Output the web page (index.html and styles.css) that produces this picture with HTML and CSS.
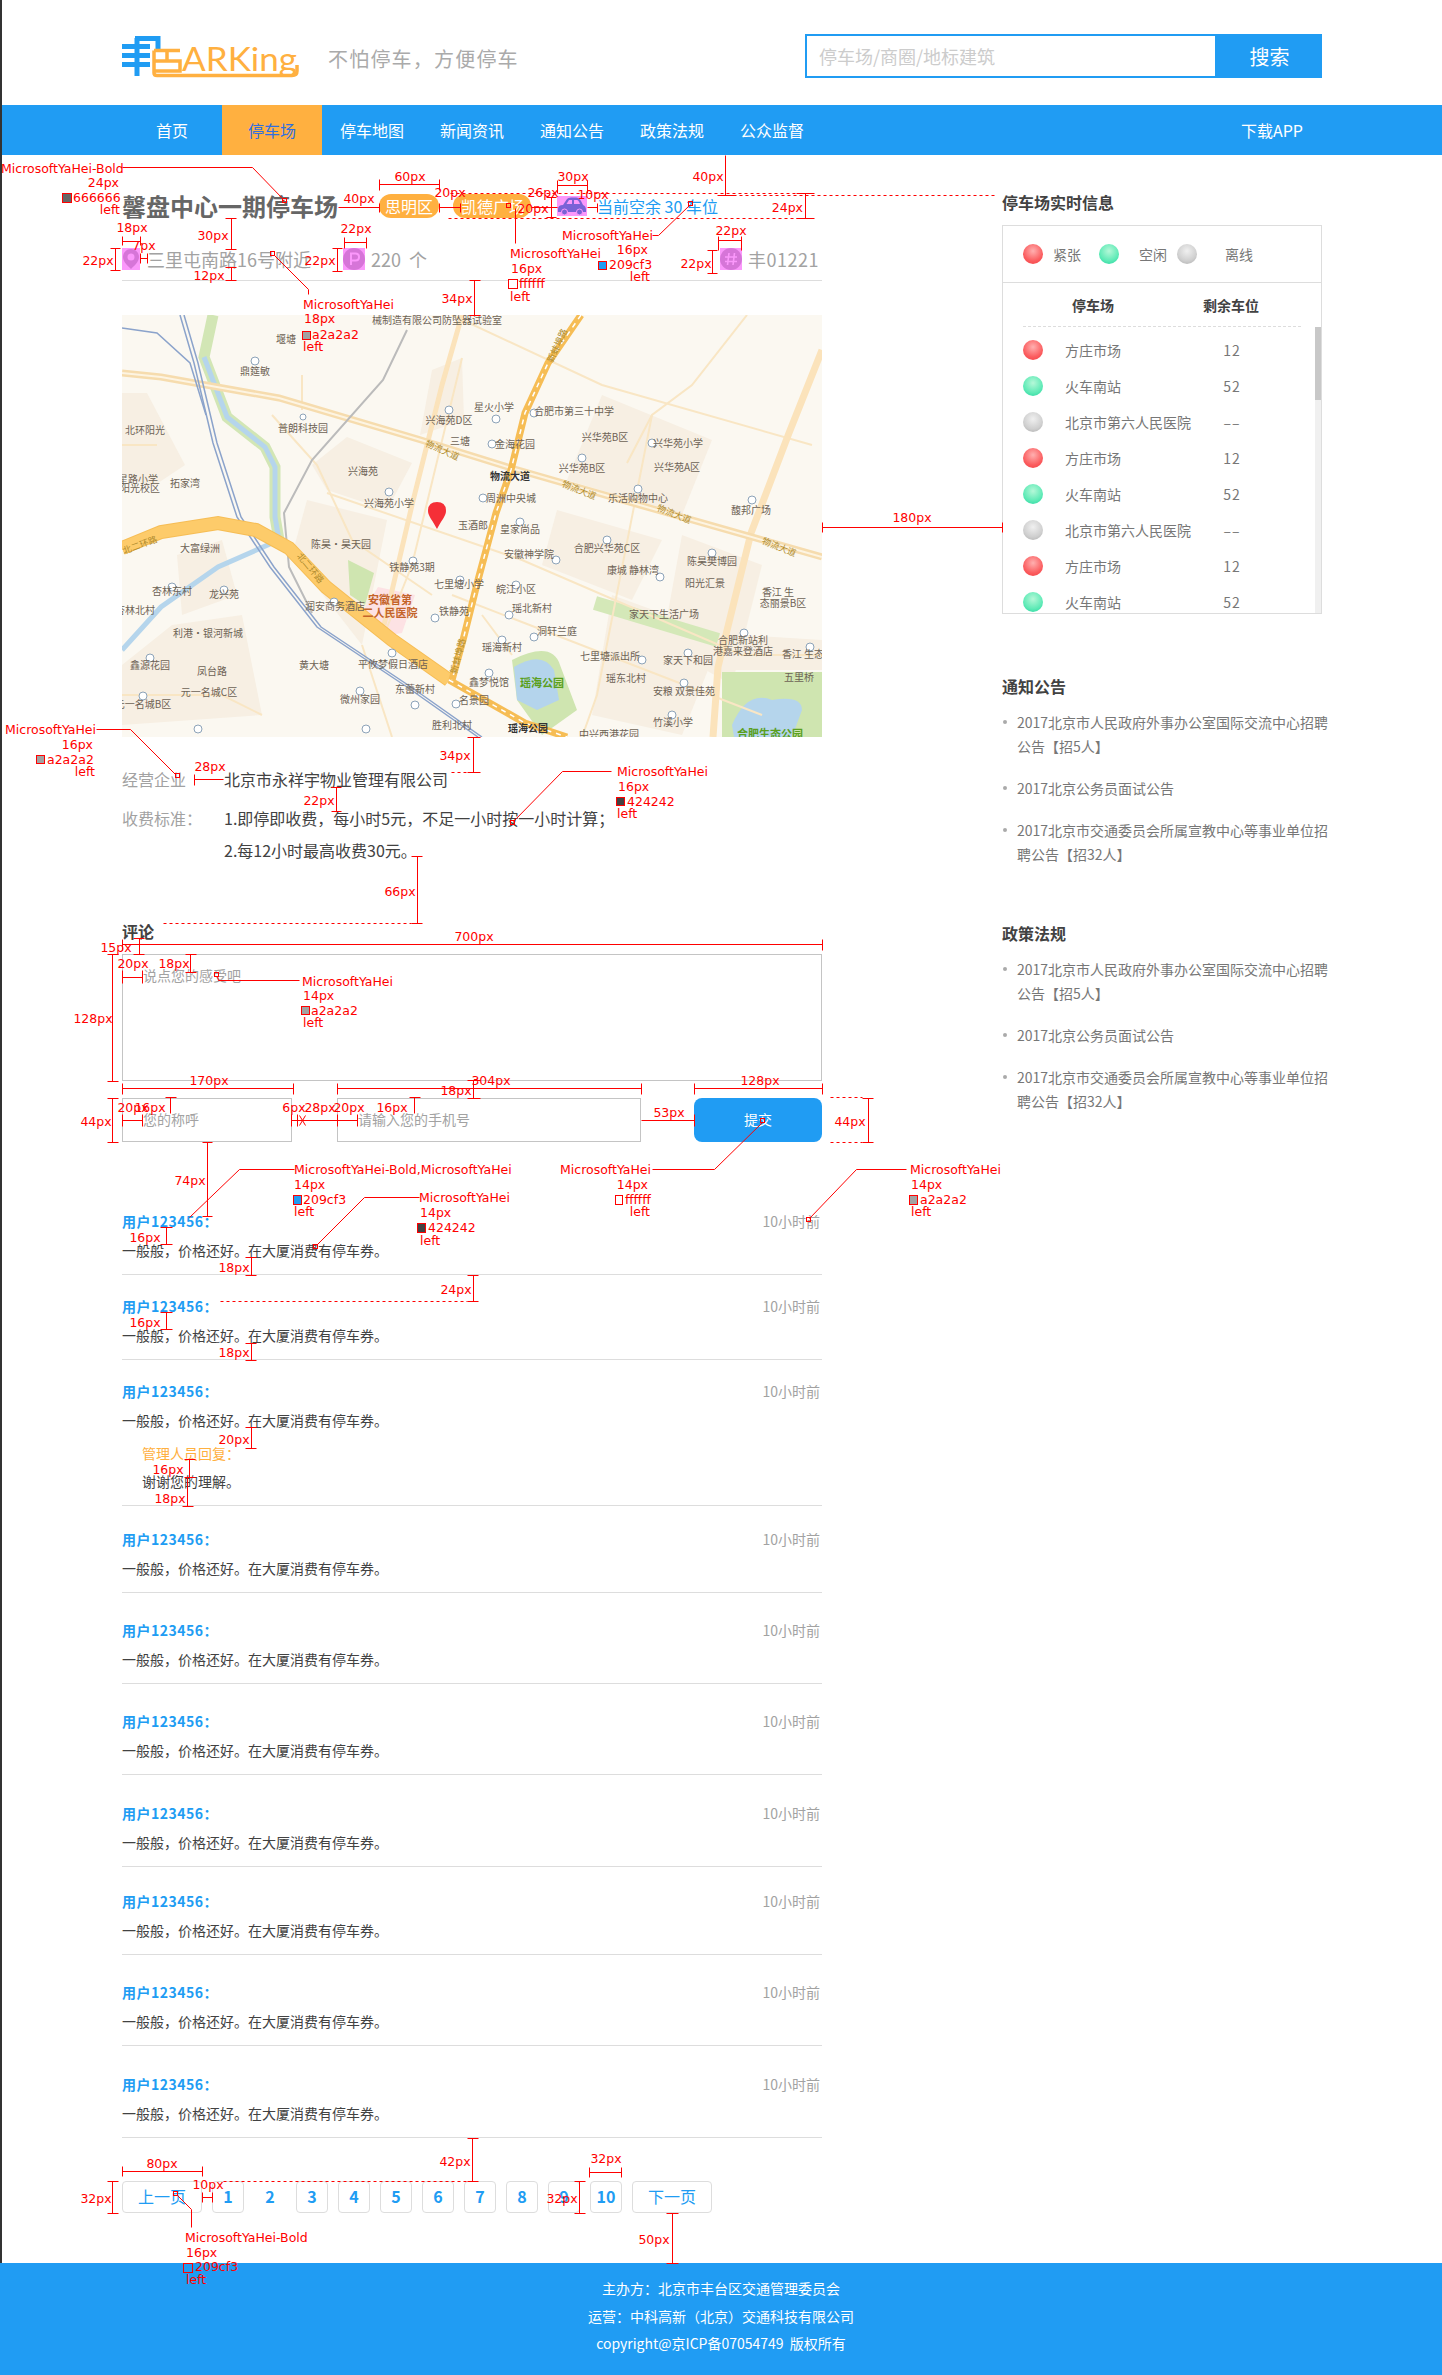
FILE: index.html
```html
<!DOCTYPE html>
<html lang="zh-CN">
<head>
  <meta charset="UTF-8" />
  <title>馨盘中心一期停车场</title>
  <link rel="stylesheet" href="styles.css">
</head>
<body>
  <div class="page">
    <header class="container top">
      <svg class="logo" width="178" height="44" viewBox="0 0 178 44">
        <g fill="none" stroke="#209cf3" stroke-width="5">
          <path d="M0 11.500H28M0 20.500H28M0 29.500H28M15 3V41" />
          <path d="M13 3.500H36V14" />
        </g>
        <g fill="none" stroke="#ffb040" stroke-width="3.500">
          <path d="M32 15.500H58M45 15.500V26M32 26H58V36H32M32 15.500V38Q32 40.500 35 40.500H170Q175 40.500 175 36V30" />
        </g>
        <text class="logo-text" x="60" y="36" textLength="115" lengthAdjust="spacingAndGlyphs">ARKing</text>
      </svg>
      <div class="slogan">不怕停车，方便停车</div>
      <form class="search">
        <input type="text" placeholder="停车场/商圈/地标建筑" />
        <button type="button">搜索</button>
      </form>
    </header>

    <nav class="nav">
      <div class="container nav-row">
        <a class="nav-item">首页</a>
        <a class="nav-item active">停车场</a>
        <a class="nav-item">停车地图</a>
        <a class="nav-item">新闻资讯</a>
        <a class="nav-item">通知公告</a>
        <a class="nav-item">政策法规</a>
        <a class="nav-item">公众监督</a>
        <a class="nav-app">下载APP</a>
      </div>
    </nav>

    <main class="container main">
      <section class="left">
        <div class="title-row">
          <h1>馨盘中心一期停车场</h1>
          <span class="tag tag-first">思明区</span>
          <span class="tag">凯德广场</span>
          <svg class="car-icon" width="30" height="20" viewBox="0 0 30 20">
            <rect width="30" height="20" fill="#fb98fb" />
            <path d="M1 13Q1 9 6 9L10 3Q11 1.500 14 1.500H19Q22 1.500 24 5L26 9Q29 10 29 14V16H1Z" fill="#7a62d6" />
            <path d="M12 4H15V8H9.500ZM17 4H20Q21.500 4 23 8H17Z" fill="#fb98fb" />
            <circle cx="7.500" cy="16" r="3" fill="#7a62d6" stroke="#fb98fb" />
            <circle cx="22.500" cy="16" r="3" fill="#7a62d6" stroke="#fb98fb" />
          </svg>
          <span class="spare">当前空余 30 车位</span>
        </div>

        <div class="meta-row">
          <div class="meta meta-addr">
            <svg class="meta-icon" width="18" height="22" viewBox="0 0 18 22">
              <rect width="18" height="22" fill="#fb98fb" />
              <path d="M9 1C4 1 1 5 1 9C1 14 6 18 9 21C12 18 17 14 17 9C17 5 14 1 9 1Z" fill="#d675d8" />
              <circle cx="9" cy="9" r="3.500" fill="#fb98fb" />
            </svg>
            <span>三里屯南路16号附近</span>
          </div>
          <div class="meta meta-count">
            <svg class="meta-icon" width="22" height="22" viewBox="0 0 22 22">
              <rect width="22" height="22" fill="#fb98fb" />
              <circle cx="11" cy="11" r="11" fill="#d675d8" />
              <path d="M8 17V5.500H12.500Q16 5.500 16 9Q16 12.500 12.500 12.500H8" fill="none" stroke="#fb98fb" stroke-width="2" />
            </svg>
            <span class="count-text">220 个</span>
          </div>
          <div class="meta">
            <svg class="meta-icon" width="22" height="22" viewBox="0 0 22 22">
              <rect width="22" height="22" fill="#fb98fb" />
              <circle cx="11" cy="11" r="11" fill="#d675d8" />
              <path d="M9 5L7.500 17M14.500 5L13 17M5 9H17M5 13.500H17" fill="none" stroke="#fb98fb" stroke-width="1.600" />
            </svg>
            <span class="plate-text">丰01221</span>
          </div>
        </div>

        <svg class="map" width="700" height="422" viewBox="0 0 700 422">
          <rect width="700" height="422" fill="#fbf8f1" />
          <g fill="#f7efe3">
            <path d="M0 78H25L63 150L30 172L0 160Z" />
            <path d="M190 150L225 122L290 148L265 195L205 175Z" />
            <path d="M185 185L265 205L240 330L205 285L170 240Z" />
            <path d="M310 55L340 43L342 105L298 120Z" />
            <path d="M480 80L590 125L560 200L445 165Z" />
            <path d="M435 195L540 225L510 285L420 250Z" />
            <path d="M560 220L640 250L610 370L540 330Z" />
            <path d="M490 280L600 320L560 420L470 400Z" />
            <path d="M55 240L100 225L115 280L60 300Z" />
            <path d="M50 310L120 300L140 400L0 410L0 350Z" />
            <path d="M620 320L700 325V355H610Z" />
          </g>
          <g fill="none" stroke="#d2e6b5">
            <path d="M91 0L82 42L105 102L143 132L153 152L153 202L157 225" stroke-width="11" />
          </g>
          <g fill="none" stroke="#b5d5ec">
            <path d="M82 42L105 102L143 132L153 152L153 202L157 225L96 252L39 292L0 335" stroke-width="5" />
          </g>
          <path d="M473 288L596 325" stroke="#d4e8b8" stroke-width="14" />
          <path d="M256 272L293 280L280 318L268 320L242 295Z" fill="#fde2e4" />
          <path d="M226 245L236 250L252 258L243 290L228 280Z" fill="#cfe5b0" />
          <path d="M390 345Q430 325 438 350L455 395L420 420L395 385Z" fill="#cfe5b0" />
          <path d="M392 352Q420 335 432 355L437 385L415 395L395 385Z" fill="#b4d4ec" />
          <path d="M600 357H700V422H600Z" fill="#cfe5b0" />
          <path d="M610 410Q625 375 650 385Q680 380 680 395L670 422H612Z" fill="#b5d5ec" />
          <g fill="none" stroke="#f9e6c4" stroke-width="2">
            <path d="M150 100L195 150L230 225L310 280" />
            <path d="M340 43L290 250L262 320" />
            <path d="M505 148L530 100L570 70L625 0" />
            <path d="M530 100L475 380L460 422" />
            <path d="M180 60V95M0 130H35" />
            <path d="M205 178L400 245L620 340H700" />
            <path d="M330 280L640 400" />
            <path d="M240 330L270 422M360 300L390 340" />
            <path d="M330 0L480 70L690 130" />
            <path d="M0 380H100L140 400" />
          </g>
          <path d="M700 35L667 118L629 218L596 352L591 422" fill="none" stroke="#fbe3bb" stroke-width="7" />
          <path d="M340 0L320 70L290 190L262 310" fill="none" stroke="#fbe3bb" stroke-width="5" />
          <path d="M0 58L39 62L157 83L299 125L389 153L535 195L700 242" fill="none" stroke="#f6dcae" stroke-width="7" />
          <path d="M0 58L39 62L157 83L299 125L389 153L535 195L700 242" fill="none" stroke="#fdf4e2" stroke-width="2" />
          <g fill="none" stroke="#8ba3cb" stroke-width="1.500">
            <path d="M58 0L72 48L91 128L115 202L148 252L195 312L285 372L356 422" />
            <path d="M62 0L76 48L95 128L119 202L152 252L199 312L289 372L360 422" />
            <path d="M0 13L35 18L68 48L84 100" />
          </g>
          <path d="M285 15L261 65L190 145L162 198L167 252L190 298" fill="none" stroke="#bbb" stroke-width="2" />
          <path d="M0 233L39 217L96 208L134 215L167 233L204 272L270 325L327 365" fill="none" stroke="#f6bd55" stroke-width="14" />
          <path d="M0 233L39 217L96 208L134 215L167 233L204 272L270 325L327 365" fill="none" stroke="#fdcb6a" stroke-width="12" />
          <path d="M327 365L403 408L445 422" fill="none" stroke="#f6bd55" stroke-width="7" />
          <path d="M459 0L426 48L403 98L389 155L374 198L356 265L341 325L330 365" fill="none" stroke="#f6bd55" stroke-width="7" />
          <path d="M327 365L403 408L445 422M459 0L426 48L403 98L389 155L374 198L356 265L341 325L330 365" fill="none" stroke="#fff" stroke-width="1.500" stroke-dasharray="5 5" />
          <g class="poi">
            <circle cx="133" cy="46" r="4" /><circle cx="327" cy="95" r="4" /><circle cx="374" cy="104" r="4" /><circle cx="412" cy="98" r="4" />
            <circle cx="181" cy="102" r="3" /><circle cx="370" cy="129" r="4" /><circle cx="530" cy="128" r="4" /><circle cx="460" cy="143" r="4" />
            <circle cx="267" cy="177" r="4" /><circle cx="361" cy="183" r="4" /><circle cx="516" cy="174" r="4" /><circle cx="630" cy="185" r="4" />
            <circle cx="398" cy="207" r="4" /><circle cx="485" cy="225" r="4" /><circle cx="590" cy="238" r="4" /><circle cx="434" cy="245" r="4" />
            <circle cx="291" cy="246" r="4" /><circle cx="338" cy="265" r="4" /><circle cx="394" cy="270" r="4" /><circle cx="538" cy="262" r="4" />
            <circle cx="50" cy="272" r="4" /><circle cx="102" cy="275" r="4" /><circle cx="212" cy="287" r="4" /><circle cx="313" cy="303" r="4" />
            <circle cx="387" cy="300" r="4" /><circle cx="412" cy="322" r="4" /><circle cx="380" cy="325" r="4" /><circle cx="622" cy="318" r="4" />
            <circle cx="28" cy="343" r="4" /><circle cx="270" cy="338" r="4" /><circle cx="520" cy="345" r="4" /><circle cx="566" cy="338" r="4" />
            <circle cx="367" cy="358" r="4" /><circle cx="562" cy="368" r="4" /><circle cx="238" cy="376" r="4" /><circle cx="293" cy="390" r="4" />
            <circle cx="334" cy="389" r="4" /><circle cx="550" cy="400" r="4" /><circle cx="21" cy="381" r="4" /><circle cx="76" cy="414" r="4" />
            <circle cx="244" cy="414" r="4" /><circle cx="688" cy="332" r="4" />
          </g>
          <g class="map-label">
            <text x="315" y="9">械制造有限公司防坠器试验室</text>
            <text x="133" y="60">鼎筵敏</text>
            <text x="164" y="28">堰塘</text>
            <text x="372" y="96">星火小学</text>
            <text x="452" y="100">合肥市第三十中学</text>
            <text x="327" y="109">兴海苑D区</text>
            <text x="181" y="117">普朗科技园</text>
            <text x="23" y="119">北环阳光</text>
            <text x="483" y="126">兴华苑B区</text>
            <text x="556" y="132">兴华苑小学</text>
            <text x="338" y="130">三塘</text>
            <text x="393" y="133">金海花园</text>
            <text x="241" y="160">兴海苑</text>
            <text x="460" y="157">兴华苑B区</text>
            <text x="555" y="156">兴华苑A区</text>
            <text x="16" y="168">星路小学</text>
            <text x="18" y="177">阳光校区</text>
            <text x="63" y="172">拓家湾</text>
            <text x="267" y="192">兴海苑小学</text>
            <text x="389" y="187">周洲中央城</text>
            <text x="516" y="187">乐活购物中心</text>
            <text x="629" y="199">馥邦广场</text>
            <text x="351" y="214">玉酒郎</text>
            <text x="398" y="218">皇家尚品</text>
            <text x="219" y="233">陈昊·昊天园</text>
            <text x="485" y="237">合肥兴华苑C区</text>
            <text x="590" y="250">陈昊樊博园</text>
            <text x="407" y="243">安徽神学院</text>
            <text x="78" y="237">大富绿洲</text>
            <text x="290" y="256">铁静苑3期</text>
            <text x="511" y="259">康城 静林湾</text>
            <text x="583" y="272">阳光汇景</text>
            <text x="337" y="273">七里塘小学</text>
            <text x="394" y="278">皖江小区</text>
            <text x="50" y="280">杏林东村</text>
            <text x="102" y="283">龙兴苑</text>
            <text x="656" y="281">香江 生</text>
            <text x="661" y="292">态丽景B区</text>
            <text x="213" y="295">润安商务酒店</text>
            <text x="332" y="300">铁静苑</text>
            <text x="410" y="297">瑶北新村</text>
            <text x="542" y="303">家天下生活广场</text>
            <text x="13" y="299">杏林北村</text>
            <text x="435" y="320">洞轩兰庭</text>
            <text x="86" y="322">利港·银河新城</text>
            <text x="380" y="336">瑶海新村</text>
            <text x="621" y="329">合肥新站利</text>
            <text x="621" y="340">港嘉来登酒店</text>
            <text x="681" y="343">香江 生态</text>
            <text x="28" y="354">鑫源花园</text>
            <text x="271" y="353">平攸梦假日酒店</text>
            <text x="192" y="354">黄大塘</text>
            <text x="488" y="345">七里塘派出所</text>
            <text x="566" y="349">家天下和园</text>
            <text x="90" y="360">凤台路</text>
            <text x="504" y="367">瑶东北村</text>
            <text x="367" y="371">鑫梦悦馆</text>
            <text x="562" y="380">安粮 双景佳苑</text>
            <text x="677" y="366">五里桥</text>
            <text x="87" y="381">元一名城C区</text>
            <text x="238" y="388">微州家园</text>
            <text x="293" y="378">东蕾新村</text>
            <text x="21" y="393">元一名城B区</text>
            <text x="352" y="389">名景园</text>
            <text x="551" y="411">竹溪小学</text>
            <text x="330" y="414">胜利北村</text>
            <text x="487" y="423">中兴西港花园</text>
          </g>
          <g class="map-label map-dark">
            <text x="388" y="165">物流大道</text>
            <text x="406" y="417">瑶海公园</text>
          </g>
          <g class="map-label map-hospital">
            <text x="268" y="289">安徽省第</text>
            <text x="268" y="302">二人民医院</text>
          </g>
          <g class="map-label map-park">
            <text x="420" y="372">瑶海公园</text>
            <text x="648" y="423">合肥生态公园</text>
          </g>
          <g class="map-label map-road">
            <text transform="translate(319 138) rotate(24)">物流大道</text>
            <text transform="translate(456 178) rotate(22)">物流大道</text>
            <text transform="translate(551 202) rotate(22)">物流大道</text>
            <text transform="translate(656 235) rotate(22)">物流大道</text>
            <text transform="translate(19 233) rotate(-20)">北二环路</text>
            <text transform="translate(186 255) rotate(50)">北二环路</text>
            <text transform="translate(438 32) rotate(-65)">新蚌埠路</text>
            <text transform="translate(339 342) rotate(-75)">新蚌埠路</text>
          </g>
          <path d="M315 214C311 206 306 201 306 196Q306 187 315 187Q324 187 324 196C324 201 319 206 315 214Z" fill="#f52f37" />
        </svg>

        <div class="info">
          <div class="info-row">
            <span class="info-label">经营企业</span>
            <div class="info-value"><p>北京市永祥宇物业管理有限公司</p></div>
          </div>
          <div class="info-row">
            <span class="info-label">收费标准：</span>
            <div class="info-value">
              <p>1.即停即收费，每小时5元，不足一小时按一小时计算；</p>
              <p>2.每12小时最高收费30元。</p>
            </div>
          </div>
        </div>

        <h3 class="comment-title">评论</h3>
        <textarea class="comment-box" placeholder="说点您的感受吧"></textarea>
        <div class="comment-form">
          <input class="input-name" type="text" placeholder="您的称呼" />
          <input class="input-phone" type="text" placeholder="请输入您的手机号" />
          <button class="submit" type="button">提交</button>
        </div>

        <div class="comments">
          <div class="comment">
            <div class="comment-head"><b>用户123456：</b><span>10小时前</span></div>
            <p>一般般，价格还好。在大厦消费有停车券。</p>
          </div>
          <div class="comment">
            <div class="comment-head"><b>用户123456：</b><span>10小时前</span></div>
            <p>一般般，价格还好。在大厦消费有停车券。</p>
          </div>
          <div class="comment">
            <div class="comment-head"><b>用户123456：</b><span>10小时前</span></div>
            <p>一般般，价格还好。在大厦消费有停车券。</p>
            <div class="reply">
              <b>管理人员回复：</b>
              <p>谢谢您的理解。</p>
            </div>
          </div>
          <div class="comment pad-2">
            <div class="comment-head"><b>用户123456：</b><span>10小时前</span></div>
            <p>一般般，价格还好。在大厦消费有停车券。</p>
          </div>
          <div class="comment pad-6">
            <div class="comment-head"><b>用户123456：</b><span>10小时前</span></div>
            <p>一般般，价格还好。在大厦消费有停车券。</p>
          </div>
          <div class="comment pad-6">
            <div class="comment-head"><b>用户123456：</b><span>10小时前</span></div>
            <p>一般般，价格还好。在大厦消费有停车券。</p>
          </div>
          <div class="comment pad-7">
            <div class="comment-head"><b>用户123456：</b><span>10小时前</span></div>
            <p>一般般，价格还好。在大厦消费有停车券。</p>
          </div>
          <div class="comment pad-3">
            <div class="comment-head"><b>用户123456：</b><span>10小时前</span></div>
            <p>一般般，价格还好。在大厦消费有停车券。</p>
          </div>
          <div class="comment pad-6">
            <div class="comment-head"><b>用户123456：</b><span>10小时前</span></div>
            <p>一般般，价格还好。在大厦消费有停车券。</p>
          </div>
          <div class="comment pad-7">
            <div class="comment-head"><b>用户123456：</b><span>10小时前</span></div>
            <p>一般般，价格还好。在大厦消费有停车券。</p>
          </div>
        </div>

        <div class="pager">
          <a class="page-btn page-wide">上一页</a>
          <a class="page-btn">1</a>
          <a class="page-btn page-plain">2</a>
          <a class="page-btn">3</a>
          <a class="page-btn">4</a>
          <a class="page-btn">5</a>
          <a class="page-btn">6</a>
          <a class="page-btn">7</a>
          <a class="page-btn">8</a>
          <a class="page-btn">9</a>
          <a class="page-btn">10</a>
          <a class="page-btn page-wide">下一页</a>
        </div>
      </section>

      <aside class="right">
        <h3 class="side-title side-first">停车场实时信息</h3>
        <div class="panel">
          <div class="legend">
            <i class="dot red"></i><span class="legend-a">紧张</span>
            <i class="dot green"></i><span class="legend-b">空闲</span>
            <i class="dot grey"></i><span class="legend-c">离线</span>
          </div>
          <div class="panel-head"><span class="head-name">停车场</span><span class="head-left">剩余车位</span></div>
          <div class="panel-body">
            <div class="lot"><i class="dot red"></i><span class="lot-name">方庄市场</span><span class="lot-left">12</span></div>
            <div class="lot"><i class="dot green"></i><span class="lot-name">火车南站</span><span class="lot-left">52</span></div>
            <div class="lot"><i class="dot grey"></i><span class="lot-name">北京市第六人民医院</span><span class="lot-left">––</span></div>
            <div class="lot"><i class="dot red"></i><span class="lot-name">方庄市场</span><span class="lot-left">12</span></div>
            <div class="lot"><i class="dot green"></i><span class="lot-name">火车南站</span><span class="lot-left">52</span></div>
            <div class="lot"><i class="dot grey"></i><span class="lot-name">北京市第六人民医院</span><span class="lot-left">––</span></div>
            <div class="lot"><i class="dot red"></i><span class="lot-name">方庄市场</span><span class="lot-left">12</span></div>
            <div class="lot"><i class="dot green"></i><span class="lot-name">火车南站</span><span class="lot-left">52</span></div>
            <div class="scroll-track"><div class="scroll-thumb"></div></div>
          </div>
        </div>

        <h3 class="side-title side-notice">通知公告</h3>
        <ul class="news">
          <li>2017北京市人民政府外事办公室国际交流中心招聘公告【招5人】</li>
          <li>2017北京公务员面试公告</li>
          <li>2017北京市交通委员会所属宣教中心等事业单位招聘公告【招32人】</li>
        </ul>

        <h3 class="side-title">政策法规</h3>
        <ul class="news">
          <li>2017北京市人民政府外事办公室国际交流中心招聘公告【招5人】</li>
          <li>2017北京公务员面试公告</li>
          <li>2017北京市交通委员会所属宣教中心等事业单位招聘公告【招32人】</li>
        </ul>
      </aside>
    </main>
  </div>

  <footer class="footer">
    <p>主办方：北京市丰台区交通管理委员会</p>
    <p>运营：中科高新（北京）交通科技有限公司</p>
    <p>copyright@京ICP备07054749&nbsp;&nbsp;版权所有</p>
  </footer>

  <!-- design spec marks drawn over the page -->
  <svg class="marks" width="1442" height="2375" viewBox="0 0 1442 2375">
    <g class="mark-lines" transform="translate(.5 .5)">
      <!-- title row -->
      <path d="M122 167H252L282 198M284 200h-2" />
      <path d="M379 184H439M379 179V190M439 179V190" />
      <path d="M338 207H379M379 203V212M439 207H460M439 203V212M460 203V212" />
      <path d="M531 207H557M587 207H597M597 203V212M551 197V217M546 197H556M546 217H556" />
      <path d="M557 185H587M557 180V193M587 180V193" />
      <path d="M805 193V218M796 193H814M796 218H814M725 155V195M717 195H735" />
      <path d="M515 208V243M652 235H658L689 205" />
      <path d="M718 240H741M718 236V250M741 236V250M712 250V273M707 250H717M707 273H717" />
      <path d="M344 242H366M344 237V248M366 237V248M337 248V271M332 248H342M332 271H342" />
      <path d="M122 241H140M122 236V245M140 236V245M140 258H147M140 253V263M147 253V263" />
      <path d="M115 248V270M110 248H120M110 270H120M231 218V249M225 218H236M225 249H236M231 267V280M225 267H236M225 280H236" />
      <path d="M274 255L308 289V294" />
      <path d="M474 280V315M469 280H480M469 315H480" />
      <path d="M822 527H1002M822 522V532M1002 522V532" />
      <!-- info -->
      <path d="M473 737V772M467 737H480M467 772H480" />
      <path d="M96 729H130L175 774" />
      <path d="M194 779H223M194 774V785M336 787V811M331 787H341M331 811H341" />
      <path d="M513 821L562 771H611" />
      <path d="M417 856V923M411 856H422M411 923H422" />
      <!-- comment form -->
      <path d="M122 944H822M122 939V950M822 939V950" />
      <path d="M139 938V954M133 938H144M133 954H144M112 954V1081M107 954H118M107 1081H118" />
      <path d="M122 977H142M122 970V983M142 970V983M190 954V972M185 954H196M185 972H196M218 980H299M217 976L218 980" />
      <path d="M122 1088H293M122 1083V1094M293 1083V1094M337 1088H641M337 1083V1094M641 1083V1094M694 1088H822M694 1083V1094M822 1083V1094" />
      <path d="M473 1080V1098M467 1080H480M467 1098H480" />
      <path d="M112 1098V1142M107 1098H118M107 1142H118M170 1097V1113M165 1097H176M414 1097V1113M409 1097H420" />
      <path d="M122 1120H142M122 1114V1126M142 1114V1126M291 1120H357M291 1114V1126M297 1114V1126M337 1114V1126M357 1114V1126M299 1115L305 1125M305 1115L299 1125" />
      <path d="M641 1120H694M694 1114V1126M868 1098V1142M862 1098H873M862 1142H873" />
      <path d="M207 1142V1216M202 1142H212M202 1216H212" />
      <path d="M294 1169H239L189 1217M419 1197H364L316 1245M652 1169H714L762 1122M906 1169H856L809 1218" />
      <!-- comments -->
      <path d="M166 1227V1244M160 1227H172M160 1244H172M251 1257V1275M245 1257H256M245 1275H256" />
      <path d="M473 1275V1301M467 1275H478M467 1301H478" />
      <path d="M166 1312V1329M160 1312H172M160 1329H172M251 1343V1360M245 1343H256M245 1360H256" />
      <path d="M251 1427V1448M245 1427H256M245 1448H256M189 1459V1477M184 1459H195M184 1477H195M187 1477V1506M182 1506H193" />
      <!-- pager -->
      <path d="M122 2171H202M122 2166V2176M202 2166V2176M202 2197H212M202 2192V2202M212 2192V2202" />
      <path d="M472 2138V2181M467 2138H478M467 2181H478M112 2181V2213M107 2181H118M107 2213H118" />
      <path d="M579 2181V2213M574 2181H585M574 2213H585M589 2172H621M589 2167V2177M621 2167V2177" />
      <path d="M177 2195L191 2209V2227M672 2213V2263M666 2213H678M666 2263H678" />
    </g>
    <g class="mark-dash" transform="translate(.5 .5)">
      <path d="M450 193H804M721 195H997M448 218H804" />
      <path d="M451 772H467M163 923H411M830 1097H862M830 1142H862M220 1301H467M223 2181H468" />
    </g>
    <g class="mark-boxes" transform="translate(.5 .5)">
      <rect x="282" y="198" width="4" height="4" />
      <rect x="506" y="203" width="4" height="4" />
      <rect x="688" y="201" width="4" height="4" />
      <rect x="270" y="251" width="4" height="4" />
      <rect x="175" y="773" width="4" height="4" />
      <rect x="510" y="820" width="4" height="4" />
      <rect x="214" y="972" width="4" height="4" />
      <rect x="313" y="1244" width="4" height="4" />
      <rect x="760" y="1118" width="4" height="4" />
      <rect x="806" y="1217" width="4" height="4" />
      <rect x="173" y="2191" width="4" height="4" />
    </g>
    <g class="mark-swatch" transform="translate(.5 .5)">
      <rect x="62" y="193" width="9" height="9" fill="#666666" />
      <rect x="508" y="279" width="9" height="9" fill="#ffffff" />
      <rect x="598" y="261" width="8" height="8" fill="#209cf3" />
      <rect x="302" y="331" width="8" height="8" fill="#a2a2a2" />
      <rect x="36" y="755" width="8" height="8" fill="#a2a2a2" />
      <rect x="616" y="797" width="8" height="8" fill="#424242" />
      <rect x="301" y="1006" width="8" height="8" fill="#a2a2a2" />
      <rect x="293" y="1195" width="8" height="9" fill="#209cf3" />
      <rect x="417" y="1223" width="8" height="9" fill="#424242" />
      <rect x="615" y="1195" width="7" height="9" fill="#ffffff" />
      <rect x="909" y="1195" width="8" height="9" fill="#a2a2a2" />
      <rect x="183" y="2263" width="9" height="9" fill="#209cf3" />
    </g>
    <g class="mark-text">
      <text x="1" y="173">MicrosoftYaHei-Bold</text>
      <text class="end" x="119" y="187">24px</text>
      <text x="73" y="202">666666</text>
      <text class="end" x="120" y="214">left</text>
      <text class="mid" x="410" y="181">60px</text>
      <text class="mid" x="359" y="203">40px</text>
      <text class="mid" x="450" y="197">20px</text>
      <text class="mid" x="543" y="197">26px</text>
      <text class="mid" x="533" y="213">20px</text>
      <text class="mid" x="573" y="181">30px</text>
      <text class="mid" x="593" y="199">10px</text>
      <text class="mid" x="708" y="181">40px</text>
      <text class="end" x="803" y="212">24px</text>
      <text x="510" y="258">MicrosoftYaHei</text>
      <text x="511" y="273">16px</text>
      <text x="519" y="288">ffffff</text>
      <text x="510" y="301">left</text>
      <text x="562" y="240">MicrosoftYaHei</text>
      <text class="end" x="648" y="254">16px</text>
      <text x="609" y="269">209cf3</text>
      <text class="end" x="650" y="281">left</text>
      <text class="mid" x="731" y="235">22px</text>
      <text class="mid" x="696" y="268">22px</text>
      <text class="mid" x="356" y="233">22px</text>
      <text class="mid" x="320" y="265">22px</text>
      <text class="mid" x="132" y="232">18px</text>
      <text class="mid" x="144" y="250">7px</text>
      <text class="mid" x="98" y="265">22px</text>
      <text class="mid" x="213" y="240">30px</text>
      <text class="mid" x="209" y="280">12px</text>
      <text x="303" y="309">MicrosoftYaHei</text>
      <text x="304" y="323">18px</text>
      <text x="312" y="339">a2a2a2</text>
      <text x="303" y="351">left</text>
      <text class="mid" x="457" y="303">34px</text>
      <text class="mid" x="912" y="522">180px</text>
      <text class="mid" x="455" y="760">34px</text>
      <text x="5" y="734">MicrosoftYaHei</text>
      <text class="end" x="93" y="749">16px</text>
      <text x="47" y="764">a2a2a2</text>
      <text class="end" x="95" y="776">left</text>
      <text class="mid" x="210" y="771">28px</text>
      <text class="mid" x="319" y="805">22px</text>
      <text x="617" y="776">MicrosoftYaHei</text>
      <text x="618" y="791">16px</text>
      <text x="627" y="806">424242</text>
      <text x="617" y="818">left</text>
      <text class="mid" x="400" y="896">66px</text>
      <text class="mid" x="474" y="941">700px</text>
      <text class="mid" x="116" y="952">15px</text>
      <text class="mid" x="93" y="1023">128px</text>
      <text class="mid" x="133" y="968">20px</text>
      <text class="mid" x="174" y="968">18px</text>
      <text x="302" y="986">MicrosoftYaHei</text>
      <text x="303" y="1000">14px</text>
      <text x="311" y="1015">a2a2a2</text>
      <text x="303" y="1027">left</text>
      <text class="mid" x="209" y="1085">170px</text>
      <text class="mid" x="491" y="1085">304px</text>
      <text class="mid" x="760" y="1085">128px</text>
      <text class="mid" x="456" y="1095">18px</text>
      <text class="mid" x="96" y="1126">44px</text>
      <text class="mid" x="133" y="1112">20px</text>
      <text class="mid" x="150" y="1112">16px</text>
      <text class="mid" x="294" y="1112">6px</text>
      <text class="mid" x="320" y="1112">28px</text>
      <text class="mid" x="349" y="1112">20px</text>
      <text class="mid" x="392" y="1112">16px</text>
      <text class="mid" x="669" y="1117">53px</text>
      <text class="mid" x="850" y="1126">44px</text>
      <text class="mid" x="190" y="1185">74px</text>
      <text x="294" y="1174">MicrosoftYaHei-Bold,MicrosoftYaHei</text>
      <text x="294" y="1189">14px</text>
      <text x="303" y="1204">209cf3</text>
      <text x="294" y="1216">left</text>
      <text x="419" y="1202">MicrosoftYaHei</text>
      <text x="420" y="1217">14px</text>
      <text x="428" y="1232">424242</text>
      <text x="420" y="1245">left</text>
      <text x="560" y="1174">MicrosoftYaHei</text>
      <text class="end" x="648" y="1189">14px</text>
      <text x="625" y="1204">ffffff</text>
      <text class="end" x="650" y="1216">left</text>
      <text x="910" y="1174">MicrosoftYaHei</text>
      <text x="911" y="1189">14px</text>
      <text x="920" y="1204">a2a2a2</text>
      <text x="911" y="1216">left</text>
      <text class="mid" x="145" y="1242">16px</text>
      <text class="mid" x="234" y="1272">18px</text>
      <text class="mid" x="456" y="1294">24px</text>
      <text class="mid" x="145" y="1327">16px</text>
      <text class="mid" x="234" y="1357">18px</text>
      <text class="mid" x="234" y="1444">20px</text>
      <text class="mid" x="168" y="1474">16px</text>
      <text class="mid" x="170" y="1503">18px</text>
      <text class="mid" x="162" y="2168">80px</text>
      <text class="mid" x="208" y="2189">10px</text>
      <text class="mid" x="455" y="2166">42px</text>
      <text class="mid" x="96" y="2203">32px</text>
      <text class="mid" x="562" y="2203">32px</text>
      <text class="mid" x="606" y="2163">32px</text>
      <text x="185" y="2242">MicrosoftYaHei-Bold</text>
      <text x="186" y="2257">16px</text>
      <text x="195" y="2271">209cf3</text>
      <text x="186" y="2284">left</text>
      <text class="mid" x="654" y="2244">50px</text>
    </g>
  </svg>
</body>
</html>
```

FILE: styles.css
```css
* {
  box-sizing: border-box;
}
body {
  margin: 0;
  position: relative;
  font-family: "Noto Sans CJK SC", "Noto Sans", sans-serif;
  color: #424242;
  background: #fff;
}
h1, h3, p, ul {
  margin: 0;
  padding: 0;
}
.page {
  border-left: 2px solid #333;
}
.container {
  width: 1200px;
  margin: 0 auto;
}

/* header */
.top {
  display: flex;
  height: 105px;
  padding-top: 34px;
}
.logo {
  margin-top: 1px;
}
.logo-text {
  font-family: "Lato", sans-serif;
  font-weight: 400;
  font-size: 33px;
  fill: #ffb040;
}
.slogan {
  margin: 11px 0 0 28px;
  font-size: 20px;
  line-height: 28px;
  letter-spacing: 1.2px;
  color: #aaa;
}
.search {
  display: flex;
  margin-left: auto;
  width: 517px;
  height: 44px;
  border: 2px solid #209cf3;
}
.search input {
  flex: 1;
  min-width: 0;
  border: none;
  outline: none;
  padding: 0 12px;
  font-family: inherit;
  font-size: 18px;
}
.search input::placeholder {
  color: #ccc;
}
.search button {
  width: 105px;
  padding: 0 0 0 4px;
  border: none;
  background: #209cf3;
  color: #fff;
  font-family: inherit;
  font-size: 20px;
}

/* nav */
.nav {
  background: #209cf3;
  height: 50px;
}
.nav-row {
  display: flex;
}
.nav-item {
  width: 100px;
  text-align: center;
  line-height: 50px;
  font-size: 16px;
  color: #fff;
}
.nav-item.active {
  background: #ffb040;
  color: #2f6fe0;
}
.nav-app {
  margin-left: auto;
  padding-right: 19px;
  line-height: 50px;
  font-size: 16px;
  color: #fff;
}

/* layout */
.main {
  display: flex;
  gap: 180px;
}
.left {
  width: 700px;
  flex: none;
  padding-bottom: 50px;
}
.right {
  width: 320px;
  flex: none;
}

/* title */
.title-row {
  display: flex;
  align-items: center;
  height: 25px;
  margin-top: 38px;
}
.title-row h1 {
  font-size: 24px;
  line-height: 25px;
  color: #666;
  white-space: nowrap;
}
.tag {
  height: 24px;
  padding: 0 8px;
  margin-left: 14px;
  border-radius: 12px;
  background: #ffb040;
  color: #fff;
  font-size: 16px;
  line-height: 24px;
  white-space: nowrap;
  width: 78px;
  overflow: hidden;
}
.tag-first {
  margin-left: 41px;
  width: 60px;
  padding: 0 6px;
}
.car-icon {
  margin-left: 26px;
}
.spare {
  margin-left: 10px;
  font-size: 16px;
  color: #209cf3;
  white-space: nowrap;
}
.meta-row {
  display: flex;
  margin-top: 30px;
  padding-bottom: 10px;
  border-bottom: 1px solid #ddd;
}
.meta {
  display: flex;
  align-items: center;
  height: 22px;
  font-size: 18px;
  color: #a2a2a2;
}
.meta-addr {
  width: 221px;
}
.meta-count {
  width: 377px;
}
.meta-icon {
  flex: none;
  margin-right: 6px;
}
.meta-addr .meta-icon {
  margin-right: 7px;
}
.count-text {
  word-spacing: 4px;
}
.plate-text {
  letter-spacing: .5px;
}
.map {
  display: block;
  margin-top: 34px;
}
.map-label text {
  font-size: 10px;
  fill: #6d6255;
  text-anchor: middle;
}
.map-dark text {
  font-weight: 700;
  fill: #333;
}
.map-hospital text {
  font-size: 11px;
  font-weight: 700;
  fill: #c4642a;
}
.map-park text {
  font-size: 11px;
  font-weight: 700;
  fill: #5a9f1d;
}
.map-road text {
  font-size: 9px;
  fill: #b08c2e;
}
.poi circle {
  fill: #fff;
  stroke: #8da3b8;
  stroke-width: 1;
}

/* info */
.info {
  margin-top: 31px;
  font-size: 16px;
  line-height: 22px;
}
.info-row {
  display: flex;
  margin-bottom: 17px;
}
.info-label {
  width: 102px;
  flex: none;
  color: #a2a2a2;
}
.info-value p {
  margin-bottom: 10px;
}
.info-value p:last-child {
  margin-bottom: 0;
}

/* comment form */
.comment-title {
  margin-top: 59px;
  font-size: 16px;
  line-height: 22px;
}
.comment-box {
  display: block;
  width: 700px;
  height: 127px;
  margin-top: 12px;
  padding: 10px 20px;
  border: 1px solid #c4c4c4;
  outline: none;
  resize: none;
  font-family: inherit;
  font-size: 14px;
}
.comment-form {
  display: flex;
  margin-top: 17px;
}
.comment-form input {
  height: 44px;
  padding: 0 20px 2px;
  border: 1px solid #c4c4c4;
  outline: none;
  font-family: inherit;
  font-size: 14px;
}
textarea::placeholder, .comment-form input::placeholder {
  color: #a2a2a2;
}
.input-name {
  width: 170px;
}
.input-phone {
  width: 304px;
  margin-left: 45px;
}
.submit {
  width: 128px;
  height: 44px;
  margin-left: 53px;
  padding: 0 0 2px;
  border: none;
  border-radius: 8px;
  background: #209cf3;
  color: #fff;
  font-family: inherit;
  font-size: 14px;
}

/* comments */
.comments {
  margin-top: 48px;
}
.comment {
  padding: 21px 0 14px;
  border-bottom: 1px solid #ddd;
  font-size: 14px;
  line-height: 20px;
}
.comment.pad-2 {
  padding-top: 23px;
}
.comment.pad-3 {
  padding-top: 24px;
}
.comment.pad-6 {
  padding-top: 27px;
}
.comment.pad-7 {
  padding-top: 28px;
}
.comment-head {
  display: flex;
  justify-content: space-between;
  margin-bottom: 9px;
  padding-right: 2px;
}
.comment-head b {
  color: #209cf3;
  letter-spacing: .5px;
}
.comment-head span {
  color: #a2a2a2;
}
.reply {
  margin: 13px 0 0 20px;
}
.reply b {
  display: block;
  font-weight: 400;
  color: #ffb040;
}
.reply p {
  margin-top: 8px;
}

/* pager */
.pager {
  display: flex;
  gap: 10px;
  margin-top: 43px;
}
.page-btn {
  width: 32px;
  height: 32px;
  border: 1px solid #ddd;
  border-radius: 4px;
  text-align: center;
  font-size: 16px;
  font-weight: 700;
  line-height: 28px;
  color: #209cf3;
}
.page-wide {
  width: 80px;
  font-weight: 400;
}
.page-plain {
  border-color: transparent;
}

/* sidebar */
.side-title {
  margin-top: 56px;
  font-size: 16px;
  line-height: 22px;
}
.side-first {
  margin-top: 36px;
}
.side-notice {
  margin-top: 61px;
}
.panel {
  height: 389px;
  margin-top: 12px;
  border: 1px solid #ddd;
  overflow: hidden;
}
.legend {
  display: flex;
  align-items: center;
  height: 57px;
  padding-left: 20px;
  border-bottom: 1px solid #ddd;
  font-size: 14px;
  color: #777;
}
.legend-a {
  margin: 0 18px 0 10px;
}
.legend-b {
  margin: 0 10px 0 20px;
}
.legend-c {
  margin-left: 28px;
}
.dot {
  flex: none;
  width: 20px;
  height: 20px;
  border-radius: 50%;
}
.dot.red {
  background: radial-gradient(circle at 50% 35%, #ffb0b0, #fb5e60 60%, #f23a3e);
}
.dot.green {
  background: radial-gradient(circle at 50% 35%, #b5f8d8, #5eeab6 60%, #1fd29c);
}
.dot.grey {
  background: radial-gradient(circle at 50% 35%, #f0f0f0, #cfcfcf 60%, #aaa);
}
.panel-head {
  display: flex;
  height: 44px;
  margin: 0 20px;
  width: 278px;
  line-height: 44px;
  font-size: 14px;
  font-weight: 700;
  border-bottom: 1px dashed #ddd;
}
.head-name {
  margin-left: 49px;
}
.head-left {
  margin-left: 89px;
}
.panel-body {
  position: relative;
  padding: 5px 0 0 20px;
  height: 286px;
  overflow: hidden;
}
.lot {
  display: flex;
  align-items: center;
  height: 36px;
  font-size: 14px;
  color: #777;
}
.lot-name {
  width: 147px;
  margin-left: 22px;
  white-space: nowrap;
}
.lot-left {
  width: 40px;
  text-align: center;
  letter-spacing: 1px;
}
.scroll-track {
  position: absolute;
  top: 0;
  right: 0;
  width: 6px;
  height: 100%;
  background: #f0f0f0;
}
.scroll-thumb {
  height: 73px;
  background: #c8c8c8;
}
.news {
  margin-top: 13px;
  list-style: none;
  font-size: 14px;
  line-height: 24px;
  color: #777;
}
.news li {
  position: relative;
  width: 332px;
  padding-left: 15px;
  margin-bottom: 18px;
}
.news li::before {
  content: "";
  position: absolute;
  left: 1px;
  top: 10px;
  width: 4px;
  height: 4px;
  border-radius: 50%;
  background: #aaa;
}

/* footer */
.footer {
  height: 112px;
  padding-top: 12px;
  background: #209cf3;
  text-align: center;
  font-size: 14px;
  line-height: 27.5px;
  color: #fff;
}

/* spec marks */
.marks {
  position: absolute;
  top: 0;
  left: 0;
  pointer-events: none;
}
.mark-lines, .mark-dash, .mark-boxes, .mark-swatch {
  fill: none;
  stroke: #f00;
  stroke-width: 1;
}
.mark-dash {
  stroke-dasharray: 3 3;
}
.mark-text text {
  font-family: "DejaVu Sans", sans-serif;
  font-size: 12.5px;
  fill: #f00;
}
.mark-text .mid {
  text-anchor: middle;
}
.mark-text .end {
  text-anchor: end;
}
```
